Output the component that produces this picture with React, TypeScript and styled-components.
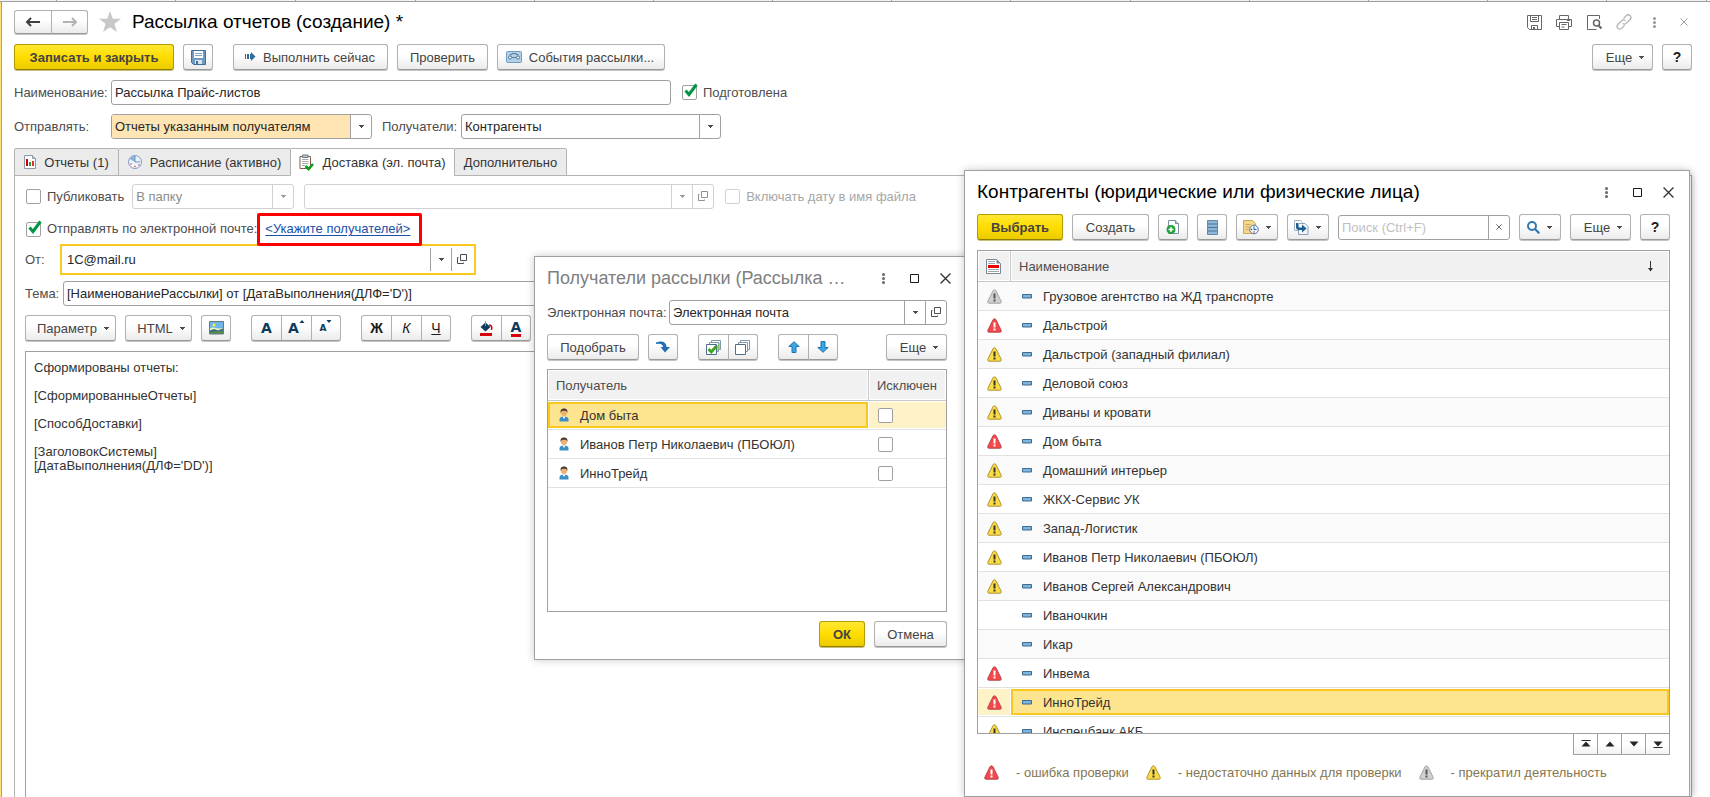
import React from "react";
import styled, { createGlobalStyle, css } from "styled-components";

const c = {
  text: "#333333",
  label: "#4d4d4d",
  line: "#a0a0a0",
  soft: "#d2d2d2",
  accent: "#f9c81e",
  accentFill: "#fde58f",
  accentPale: "#fef2c8",
};

const GlobalStyle = createGlobalStyle`
  *, *::before, *::after { box-sizing: border-box; }
  html, body, #root { height: 100%; }
  body { margin: 0; background: #fff; overflow: hidden; }
  body, button, input, select, textarea {
    font-family: "Liberation Sans", Arial, sans-serif;
    font-size: 13px;
    color: ${c.text};
  }
  svg { display: block; flex: none; }
`;

/* ---------- shell ---------- */

const Shell = styled.div`
  position: relative;
  display: flex;
  flex-direction: column;
  height: 100vh;
  overflow: hidden;
`;

const TabStubs = styled.div`
  display: flex;
  height: 2px;
  flex: none;
  background: #f2f2f2;
  border-bottom: 1px solid ${c.line};
`;

const Stub = styled.span<{ $w: number }>`
  flex: none;
  width: ${(p) => p.$w}px;
  border-right: 1px solid ${c.line};
`;

const Edge = styled.div`
  display: flex;
  flex: 1;
  min-height: 0;
  border-left: 1px solid #ffe27a;
`;

const Main = styled.main`
  display: flex;
  flex-direction: column;
  flex: 1;
  min-width: 0;
  padding: 8px 18px 0 12px;
  border-left: 1px solid ${c.line};
`;

const Bar = styled.div<{ $top?: number; $gap?: number }>`
  display: flex;
  align-items: center;
  flex: none;
  gap: ${(p) => p.$gap ?? 9}px;
  margin-top: ${(p) => p.$top ?? 0}px;
`;

const SystemButtons = styled.div`
  display: flex;
  flex: none;
  margin-right: -7px;
`;

const Spacer = styled.span`
  flex: 1;
`;

const Title = styled.h1<{ $muted?: boolean }>`
  margin: 0;
  font-size: ${(p) => (p.$muted ? 18 : 19)}px;
  line-height: 24px;
  font-weight: 400;
  white-space: nowrap;
  color: ${(p) => (p.$muted ? "#808080" : "#000")};
`;

/* ---------- buttons ---------- */

const Button = styled.button<{ $primary?: boolean; $w?: number }>`
  display: flex;
  align-items: center;
  justify-content: center;
  flex: none;
  height: 26px;
  width: ${(p) => (p.$w ? `${p.$w}px` : "auto")};
  padding: 0;
  white-space: nowrap;
  color: #444;
  border: 1px solid #b0b0b0;
  border-bottom-color: #999;
  border-radius: 3px;
  background: linear-gradient(#fff 40%, #ebebeb);
  box-shadow: 0 1px 0 #c4c4c4;
  ${(p) =>
    p.$primary &&
    css`
      font-weight: 700;
      border-color: #b39b00;
      border-bottom-color: #917e00;
      background: linear-gradient(#ffe833, #ffdd00 50%, #ebcb00);
      box-shadow: 0 1px 0 #c9bd7a;
    `}
`;

const IconText = styled.span`
  display: flex;
  align-items: center;
  gap: 7px;
  margin-right: 2px;
`;

const MenuText = styled.span`
  display: flex;
  align-items: center;
  gap: 6px;
  padding-left: 6px;
  & > svg { margin-top: 2px; }
`;

const MenuIcon = styled.span`
  display: flex;
  align-items: center;
  gap: 6px;
  & > svg:last-child { margin-top: 2px; }
`;

const Group = styled.div<{ $left?: number }>`
  display: flex;
  margin-left: ${(p) => p.$left ?? 0}px;
  & > button + button {
    margin-left: -1px;
    border-top-left-radius: 0;
    border-bottom-left-radius: 0;
  }
  & > button:not(:last-child) {
    border-top-right-radius: 0;
    border-bottom-right-radius: 0;
  }
`;

const NavButton = styled(Button)`
  height: 24px;
`;

const GhostButton = styled.button<{ $w?: number }>`
  display: flex;
  align-items: center;
  justify-content: center;
  flex: none;
  width: ${(p) => p.$w ?? 30}px;
  height: 24px;
  padding: 0;
  border: 0;
  background: none;
`;

const HelpMark = styled.b`
  font-size: 14px;
  color: #1a1a1a;
`;

const Glyph = styled.span<{ $bold?: boolean; $italic?: boolean; $underline?: boolean }>`
  font-size: 14px;
  color: #1a1a1a;
  font-weight: ${(p) => (p.$bold ? 700 : 400)};
  font-style: ${(p) => (p.$italic ? "italic" : "normal")};
  text-decoration: ${(p) => (p.$underline ? "underline" : "none")};
`;

const Letter = styled.b<{ $size?: number; $bar?: boolean }>`
  font-family: "DejaVu Sans", Verdana, sans-serif;
  font-size: ${(p) => p.$size ?? 14}px;
  line-height: 14px;
  color: #0d3b5e;
  border-bottom: ${(p) => (p.$bar ? "3px solid #d8000c" : "0")};
`;

/* ---------- fields ---------- */

const Label = styled.label<{ $w?: number; $left?: number; $off?: boolean }>`
  flex: none;
  width: ${(p) => (p.$w ? `${p.$w}px` : "auto")};
  margin-left: ${(p) => p.$left ?? 0}px;
  line-height: 16px;
  white-space: nowrap;
  color: ${(p) => (p.$off ? "#a6a6a6" : c.label)};
`;

const Field = styled.div<{ $w?: number; $off?: boolean; $fill?: string; $focus?: boolean; $left?: number }>`
  display: flex;
  flex: ${(p) => (p.$w ? "none" : 1)};
  width: ${(p) => (p.$w ? `${p.$w}px` : "auto")};
  min-width: 0;
  height: 25px;
  margin-left: ${(p) => p.$left ?? 0}px;
  border: 1px solid ${(p) => (p.$focus ? "transparent" : p.$off ? c.soft : c.line)};
  border-radius: ${(p) => (p.$focus ? 0 : 3)}px;
  background: #fff;
  outline: ${(p) => (p.$focus ? `2px solid ${c.accent}` : "0")};
  outline-offset: 1px;
  & > input, & > select {
    flex: 1;
    width: 0;
    min-width: 0;
    height: 100%;
    padding: 0 0 0 3px;
    appearance: none;
    border: 0;
    outline: 0;
    border-radius: 2px 0 0 2px;
    background: ${(p) => p.$fill ?? "transparent"};
    color: ${(p) => (p.$off ? "#8c8c8c" : "#262626")};
    opacity: 1;
  }
  & > input::placeholder { color: #bfbfbf; }
`;

const FieldButton = styled.button<{ $off?: boolean; $w?: number }>`
  display: flex;
  align-items: center;
  justify-content: center;
  flex: none;
  width: ${(p) => p.$w ?? 21}px;
  padding: 0;
  border: 0;
  border-left: 1px solid ${(p) => (p.$off ? c.soft : c.line)};
  background: none;
`;

const CheckBox = styled.span<{ $left?: number }>`
  position: relative;
  display: block;
  flex: none;
  width: 15px;
  height: 15px;
  margin-left: ${(p) => p.$left ?? 0}px;
  & > input {
    display: block;
    appearance: none;
    width: 15px;
    height: 15px;
    margin: 0;
    border: 1px solid ${c.line};
    border-radius: 2px;
    background: #fff;
  }
  & > input:disabled { border-color: ${c.soft}; }
  & > svg {
    display: none;
    position: absolute;
    left: 2px;
    top: -2px;
    pointer-events: none;
  }
  & > input:checked + svg { display: block; }
`;

/* ---------- tabs and panel ---------- */

const Tabs = styled.div`
  display: flex;
  flex: none;
  position: relative;
  margin: 9px 0 -1px;
`;

const Tab = styled.button<{ $active?: boolean; $w: number }>`
  display: flex;
  align-items: center;
  justify-content: center;
  gap: 8px;
  width: ${(p) => p.$w}px;
  height: 28px;
  padding: 0;
  margin-right: -1px;
  white-space: nowrap;
  border: 1px solid #b3b3b3;
  border-bottom-color: ${(p) => (p.$active ? "#fff" : "#b3b3b3")};
  border-radius: 2px 2px 0 0;
  background: ${(p) => (p.$active ? "#fff" : "#ebebeb")};
`;

const Panel = styled.section`
  display: flex;
  flex-direction: column;
  flex: 1;
  min-height: 0;
  padding: 8px 10px 0;
  border: 1px solid #b3b3b3;
  border-bottom: 0;
`;

const MarkedLink = styled.span`
  position: relative;
  margin-left: 2px;
  & > a {
    color: #1b4fa8;
    line-height: 16px;
    white-space: nowrap;
    text-underline-offset: 2px;
  }
  &::after {
    content: "";
    position: absolute;
    z-index: 1;
    inset: -8px -12px -9px -8px;
    border: 3px solid #ff0000;
    border-radius: 2px;
    pointer-events: none;
  }
`;

const Editor = styled.textarea`
  flex: 1;
  min-height: 0;
  width: 100%;
  margin: 10px 0 0;
  padding: 9px 8px;
  border: 1px solid ${c.line};
  border-bottom: 0;
  outline: 0;
  resize: none;
  line-height: 14px;
  background: #fff;
`;

/* ---------- floating windows ---------- */

const Window = styled.section`
  position: absolute;
  display: flex;
  flex-direction: column;
  background: #fff;
  border: 1px solid ${c.line};
  box-shadow: 0 0 8px rgba(0, 0, 0, 0.22);
`;

const RecipientsWindow = styled(Window)`
  left: 534px;
  top: 256px;
  width: 440px;
  padding: 9px 26px 12px 12px;
`;

const WindowBehind = styled(Window)`
  left: 980px;
  right: 18px;
  top: 175px;
  bottom: 0;
`;

const PartnersWindow = styled(Window)`
  left: 964px;
  right: 20px;
  top: 170px;
  bottom: 0;
  padding: 9px 19px 0 12px;
`;

const WindowHead = styled.header`
  display: flex;
  align-items: center;
  flex: none;
  height: 24px;
  margin-right: -14px;
`;

const TableBox = styled.div<{ $h?: number; $top?: number }>`
  flex: ${(p) => (p.$h ? "none" : 1)};
  height: ${(p) => (p.$h ? `${p.$h}px` : "auto")};
  min-height: 0;
  margin-top: ${(p) => p.$top ?? 9}px;
  overflow: hidden;
  border: 1px solid ${c.line};
`;

const Table = styled.table`
  width: 100%;
  table-layout: fixed;
  border-collapse: separate;
  border-spacing: 0;
`;

const Th = styled.th<{ $w?: number; $last?: boolean }>`
  width: ${(p) => (p.$w ? `${p.$w}px` : "auto")};
  height: 31px;
  padding: 0 8px;
  text-align: left;
  font-weight: 400;
  color: ${c.label};
  background: #f1f1f1;
  border-bottom: 1px solid #c8c8c8;
  border-right: ${(p) => (p.$last ? "0" : "1px solid #c8c8c8")};
  box-shadow: inset 0 0 0 1px #fff;
`;

const ThInner = styled.div`
  display: flex;
  justify-content: space-between;
  align-items: center;
  padding-right: 7px;
`;

const Tr = styled.tr<{ $alt?: boolean }>`
  background: ${(p) => (p.$alt ? "#fafafa" : "#fff")};
`;

const Td = styled.td<{ $gap?: boolean }>`
  height: 29px;
  padding: 1px ${(p) => (p.$gap ? 1 : 0)}px 1px 0;
  border-bottom: 1px solid #e2e2e2;
`;

const Cell = styled.div<{ $pad: number; $gap?: number; $tone?: "current" | "pale" }>`
  display: flex;
  align-items: center;
  gap: ${(p) => p.$gap ?? 0}px;
  height: 26px;
  padding-left: ${(p) => p.$pad - 2}px;
  white-space: nowrap;
  border: 2px solid
    ${(p) => (p.$tone === "current" ? c.accent : p.$tone === "pale" ? c.accentPale : "transparent")};
  background: ${(p) =>
    p.$tone === "current" ? c.accentFill : p.$tone === "pale" ? c.accentPale : "transparent"};
`;

const Pager = styled.div`
  display: flex;
  justify-content: flex-end;
  flex: none;
  margin-top: -1px;
`;

const PagerButton = styled.button`
  display: flex;
  align-items: center;
  justify-content: center;
  width: 25px;
  height: 22px;
  padding: 0;
  margin-left: -1px;
  border: 1px solid ${c.line};
  background: linear-gradient(#fff 50%, #f2f2f2);
`;

const Legend = styled.footer`
  display: flex;
  align-items: center;
  flex: none;
  height: 41px;
  padding: 0 0 6px 7px;
  color: #857650;
`;

const LegendItem = styled.span`
  display: flex;
  align-items: center;
  gap: 17px;
  margin-right: 17px;
`;

/* ---------- icons ---------- */

const Caret = ({ color = "#4d4d4d" }: { color?: string }) => (
  <svg width="7" height="4" viewBox="0 0 7 4" shapeRendering="crispEdges">
    <path d="M1 0h5v1H5v1H4v1H3V2H2V1H1z" fill={color} />
  </svg>
);

const OpenIcon = ({ color = "#4d4d4d" }: { color?: string }) => (
  <svg width="11" height="11" viewBox="0 0 11 11" fill="none" stroke={color}>
    <path d="M3.500 .5h6v6h-6zM1.500 3.500H.5v6h6v-1" />
  </svg>
);

const Arrow = ({ left, color }: { left?: boolean; color: string }) => (
  <svg width="16" height="10" viewBox="0 0 16 10" fill="none" stroke={color} strokeWidth="2">
    {left ? <path d="M15 5H3M6 1L2 5l4 4" /> : <path d="M1 5h12M10 1l4 4-4 4" />}
  </svg>
);

const Star = () => (
  <svg width="22" height="22" viewBox="0 0 22 22">
    <path d="M11 0l2.800 7.800H22l-6.600 5 2.500 8.200L11 16.200 4.100 21l2.500-8.200L0 7.800h8.200z" fill="#c8c8cb" />
  </svg>
);

const Tick = () => (
  <svg width="14" height="15" viewBox="0 0 14 15">
    <path d="M1.500 7.500l3.500 4L12.500 1.500" fill="none" stroke="#009646" strokeWidth="3" />
  </svg>
);

const Floppy = () => (
  <svg width="15" height="15" viewBox="0 0 15 15">
    <path d="M.5 .5h14v14H2.500l-2-2z" fill="#6f9bc2" stroke="#416f99" />
    <path d="M3 1h9v7H3z" fill="#fff" />
    <path d="M4 3.500h7M4 5.500h7" stroke="#7da5c8" />
    <path d="M4 10h7v4H4z" fill="#d8e4ee" />
    <path d="M5 11h2v3H5z" fill="#416f99" />
  </svg>
);

const RunIcon = () => (
  <svg width="12" height="10" viewBox="0 0 12 10" fill="#2f6d9c">
    <path d="M1 2h1v5H1zM3 2h2v5H3zM6 2h1V0l4.500 4.500L7 9V7H6z" />
  </svg>
);

const TapeIcon = () => (
  <svg width="16" height="12" viewBox="0 0 16 12" fill="none">
    <rect x=".5" y=".5" width="15" height="11" rx="1" fill="#b4d0e6" stroke="#6d9cc4" />
    <path d="M4 4.500V3.500h2v-1h4v1h2v1M5.500 6.500h5" stroke="#5a7f9f" />
    <circle cx="4" cy="6.500" r="1.500" fill="#fff" stroke="#4a7398" />
    <circle cx="12" cy="6.500" r="1.500" fill="#fff" stroke="#4a7398" />
  </svg>
);

const GraySave = () => (
  <svg width="15" height="15" viewBox="0 0 15 15" fill="none" stroke="#666">
    <path d="M.5 .5h14v14h-12l-2-2zM3.500 1v5.500h8V1M5 2.500h5M5 4.500h5M4.500 14v-3.500h6V14M6.500 12v2M7.500 12v2" />
  </svg>
);

const Printer = () => (
  <svg width="16" height="15" viewBox="0 0 16 15" fill="none" stroke="#666">
    <path d="M3.500 4V.5h9V4M3.500 11.500h-3v-7h15v7h-3M3.500 7.500h9v7h-9zM5.500 9.500h5M5.500 12h3M11 5.500h3" />
  </svg>
);

const Preview = () => (
  <svg width="15" height="15" viewBox="0 0 15 15" fill="none" stroke="#666">
    <path d="M12.500 4V.5H.5v14h9" />
    <circle cx="9.500" cy="8" r="3" strokeWidth="1.500" />
    <path d="M11.500 10.500l3 3" strokeWidth="2" />
  </svg>
);

const Chain = () => (
  <svg width="16" height="16" viewBox="0 0 16 16" fill="none" stroke="#b0b0b0" strokeWidth="1.200">
    <path d="M7.500 4.500l2.800-2.800a2.600 2.600 0 0 1 3.800 3.800L10.300 9.300a2.600 2.600 0 0 1-3.700 0M8.500 11.500l-2.800 2.800a2.600 2.600 0 0 1-3.800-3.800L5.700 6.700a2.600 2.600 0 0 1 3.700 0" />
  </svg>
);

const Dots = ({ color = "#666" }: { color?: string }) => (
  <svg width="3" height="11" viewBox="0 0 3 11" fill={color}>
    <circle cx="1.500" cy="1.500" r="1.500" />
    <circle cx="1.500" cy="5.500" r="1.500" />
    <circle cx="1.500" cy="9.500" r="1.500" />
  </svg>
);

const Square = () => (
  <svg width="9" height="9" viewBox="0 0 9 9">
    <path d="M.5 .5h8v8h-8z" fill="none" stroke="#1a1a1a" />
  </svg>
);

const Cross = ({ size = 11, color = "#333" }: { size?: number; color?: string }) => (
  <svg width={size} height={size} viewBox="0 0 10 10">
    <path d="M.5 .5l9 9M9.500 .5l-9 9" stroke={color} strokeWidth="1.200" />
  </svg>
);

const ChartDoc = () => (
  <svg width="12" height="14" viewBox="0 0 12 14">
    <path d="M.5 .5h8l3 3v10H.5z" fill="#fff" stroke="#8b9bab" />
    <path d="M8.500 .5v3h3" fill="#c6d0da" stroke="#8b9bab" />
    <path d="M2 4h2v7H2z" fill="#c00" />
    <path d="M5 7h2v4H5z" fill="#2a9d3c" />
    <path d="M8 6h2v5H8z" fill="#d33" />
  </svg>
);

const Clock = () => (
  <svg width="14" height="14" viewBox="0 0 14 14">
    <circle cx="7" cy="7" r="6.500" fill="#eef4fb" stroke="#7c9fc6" />
    <path d="M7 7V.5A6.500 6.500 0 0 0 1.500 4L7 7z" fill="#8fb4dc" />
    <path d="M7 1v6h5" fill="none" stroke="#6a94c4" />
    <circle cx="11" cy="10" r=".8" fill="#e0402f" />
    <circle cx="7" cy="11.500" r=".8" fill="#e0402f" />
    <circle cx="3" cy="9" r=".8" fill="#e0402f" />
  </svg>
);

const Clipboard = () => (
  <svg width="15" height="17" viewBox="0 0 15 17">
    <path d="M1 2.500h10.500v12H1z" fill="#fff" stroke="#8a5a4a" />
    <path d="M3.500 1h5.500v2.500H3.500z" fill="#b9c4cc" stroke="#6e7b85" />
    <path d="M3 5.500h6.500M3 7.500h6.500M3 9.500h6.500M3 11.500h3" stroke="#a4adb5" />
    <path d="M6.500 12l3 3 4.500-5" fill="none" stroke="#0c9c1c" strokeWidth="2.600" />
  </svg>
);

const Picture = () => (
  <svg width="15" height="14" viewBox="0 0 15 14">
    <path d="M.5 .5h14v12.500H.5z" fill="#6fb6e8" stroke="#6a7680" />
    <path d="M1 7c4-2 8 2 13 0v2.500H1z" fill="#e9f3c0" />
    <path d="M1 9.500l4-1.500 4 1.500 5-2v5H1z" fill="#35688a" />
    <path d="M1 11l13-1v2.500H1z" fill="#5d8e3c" />
    <circle cx="5" cy="4" r="1.500" fill="#fff04a" />
  </svg>
);

const SizeMark = ({ up }: { up?: boolean }) => (
  <svg width="6" height="16" viewBox="0 0 6 16" fill="#0d3b5e">
    {up ? <path d="M3 0l2.500 3h-5z" /> : <path d="M3 3L.5 0h5z" />}
  </svg>
);

const Bucket = () => (
  <svg width="13" height="15" viewBox="0 0 13 15">
    <path d="M5.500 1.500L10.500 6 5.500 10.500.5 6z" fill="#0d3b5e" />
    <path d="M5.500 0v5" stroke="#7e9ab0" />
    <path d="M9 4c3 0 3 2 2.500 5" fill="none" stroke="#d8000c" strokeWidth="1.500" />
    <path d="M0 12h12v3H0z" fill="#d8000c" />
  </svg>
);

const Swoop = () => (
  <svg width="14" height="12" viewBox="0 0 14 12">
    <path d="M0 1.500C5-.8 10.500.5 10.500 6H14l-5 5.500L4.500 6h2.600C7 3.500 4.500 2 0 3z" fill="#1f6fb2" />
  </svg>
);

const Stack = ({ checked }: { checked?: boolean }) => (
  <svg width="16" height="15" viewBox="0 0 16 15">
    <g fill="#fff" stroke="#7f98ac">
      <path d="M5.500 .5h9v9h-9z" />
      <path d="M3.500 2.500h9v9h-9z" />
      <path d="M.5 4.500h10v10H.5z" stroke="#4f6f8a" />
    </g>
    {checked && (
      <>
        <path d="M11 6l3-4v7l-3 3z" fill="#8cc25f" opacity=".7" />
        <path d="M2.500 9l2.800 3 5.200-6" fill="none" stroke="#3aa41c" strokeWidth="2.800" />
      </>
    )}
  </svg>
);

const Block = ({ down }: { down?: boolean }) => (
  <svg width="12" height="12" viewBox="0 0 12 12">
    <path
      d={down ? "M6 11.300L.8 6.500H4V.5h4v6h3.200z" : "M6 .7l5.200 4.800H8v6H4v-6H.8z"}
      fill="#3ba5e6"
      stroke="#1f75ad"
    />
  </svg>
);

const Person = () => (
  <svg width="14" height="14" viewBox="0 0 14 14">
    <path d="M2.500 13.500v-2c0-2 1.500-3 4.500-3s4.500 1 4.500 3v2z" fill="#3a8fc7" />
    <path d="M5.500 8.500L7 11l1.500-2.500z" fill="#fff" />
    <circle cx="7" cy="5" r="3" fill="#efb070" />
    <path d="M3.700 5C3 1.500 5 .5 7 .5s4 1 3.300 4.500C9.500 3 9 2.800 7 2.800S4.500 3 3.700 5z" fill="#45352a" />
  </svg>
);

const NewDoc = () => (
  <svg width="14" height="16" viewBox="0 0 14 16">
    <path d="M2.500 1.500h7l3 3v10h-10z" fill="#fff" stroke="#7790a5" />
    <path d="M9.500 1.500v3h3" fill="#c9d6e1" stroke="#7790a5" />
    <circle cx="5" cy="10.500" r="4.500" fill="#22a03a" />
    <path d="M5 8v5M2.500 10.500h5" stroke="#fff" strokeWidth="1.400" />
  </svg>
);

const ListIcon = () => (
  <svg width="11" height="15" viewBox="0 0 11 15">
    <path d="M.5 .5h10v14H.5z" fill="#8fb6d8" stroke="#6288aa" />
    <path d="M1 4h9M1 7.500h9M1 11h9" stroke="#49749c" />
  </svg>
);

const ScheduleDoc = () => (
  <svg width="16" height="16" viewBox="0 0 16 16">
    <path d="M.5 1.500h9l3 3v10H.5z" fill="#f6d88c" stroke="#c9a85c" />
    <path d="M2.500 5.500h5M2.500 8h4M2.500 10.500h3" stroke="#c9a85c" />
    <circle cx="11" cy="10.500" r="4.300" fill="#eef4fb" stroke="#55789f" />
    <path d="M11 7.500v3h2.500" fill="none" stroke="#1f5fa8" />
    <circle cx="8.500" cy="10.500" r=".8" fill="#d22" />
    <circle cx="11" cy="13" r=".8" fill="#d22" />
  </svg>
);

const CopyDocs = () => (
  <svg width="15" height="15" viewBox="0 0 15 15">
    <path d="M.5 .5h6l2 2v8h-8z" fill="#fff" stroke="#9fb0c0" />
    <path d="M4.500 3.500h6.500l3 3v8H4.500z" fill="#f1f5f9" stroke="#8aa0b4" />
    <path d="M2 3h2v3c0 1 .5 1.500 1.500 1.500H8V4.500l4.500 4-4.500 4V10H5C3 10 2 9 2 7z" fill="#1d5e92" />
  </svg>
);

const Lens = () => (
  <svg width="13" height="13" viewBox="0 0 13 13" fill="none" stroke="#2f78b0">
    <circle cx="5" cy="5" r="4" strokeWidth="2" />
    <path d="M8 8l4.300 4.300" strokeWidth="2.200" />
  </svg>
);

const HeaderDoc = () => (
  <svg width="15" height="15" viewBox="0 0 15 15">
    <path d="M.5 .5h10l4 4v10H.5z" fill="#fff" stroke="#7a8894" />
    <path d="M10.500 .5v4h4z" fill="#7a8894" />
    <path d="M2 2.500h7M2 4.500h7M2 10.500h11M2 12.500h11" stroke="#9aa6b0" />
    <path d="M2 6h11v3H2z" fill="#f00000" />
  </svg>
);

const Dash = () => (
  <svg width="10" height="5" viewBox="0 0 10 5">
    <path d="M.5 .5h9v3.500h-9z" fill="#7fb4dc" stroke="#3d6a90" />
  </svg>
);

const SortArrow = () => (
  <svg width="7" height="11" viewBox="0 0 7 11">
    <path d="M3.500 0v9" stroke="#333" />
    <path d="M1 7h5l-2.500 3.500z" fill="#333" />
  </svg>
);

type Level = "gray" | "red" | "yellow";
const levels: Record<Level, [string, string, string]> = {
  gray: ["#d0d0d0", "#a3a3a3", "#555"],
  red: ["#f4484b", "#b8474a", "#fff"],
  yellow: ["#fbdc45", "#ab9233", "#333"],
};

const Warn = ({ level }: { level: Level }) => {
  const [fill, stroke, mark] = levels[level];
  return (
    <svg width="15" height="15" viewBox="0 0 15 15">
      <path
        d="M7.500 .8c.7 0 1.200.4 1.600 1.200l5 10.200c.5 1.100 0 2-1.100 2H2c-1.100 0-1.600-.9-1.100-2L5.900 2C6.300 1.200 6.800.8 7.500.8z"
        fill={fill}
        stroke={stroke}
      />
      <path d="M6.500 4.500h2v5h-2zM6.500 10.500h2v2h-2z" fill={mark} />
    </svg>
  );
};

const PagerIcon = ({ up, edge }: { up?: boolean; edge?: boolean }) => (
  <svg width="10" height="8" viewBox="0 0 10 8" fill="#262626">
    <path d={up ? "M5 1.500L9.500 6.500h-9z" : "M5 6.500L.5 1.500h9z"} />
    {edge && <path d={up ? "M.5 0h9v1h-9z" : "M.5 7h9v1h-9z"} />}
  </svg>
);

/* ---------- data ---------- */

const recipients = ["Дом быта", "Иванов Петр Николаевич (ПБОЮЛ)", "ИнноТрейд"];

const partners: [string, Level | null][] = [
  ["Грузовое агентство на ЖД транспорте", "gray"],
  ["Дальстрой", "red"],
  ["Дальстрой (западный филиал)", "yellow"],
  ["Деловой союз", "yellow"],
  ["Диваны и кровати", "yellow"],
  ["Дом быта", "red"],
  ["Домашний интерьер", "yellow"],
  ["ЖКХ-Сервис УК", "yellow"],
  ["Запад-Логистик", "yellow"],
  ["Иванов Петр Николаевич (ПБОЮЛ)", "yellow"],
  ["Иванов Сергей Александрович", "yellow"],
  ["Иваночкин", null],
  ["Икар", null],
  ["Инвема", "red"],
  ["ИнноТрейд", "red"],
  ["Инспецбанк АКБ", "yellow"],
];

const letterBody = `Сформированы отчеты:

[СформированныеОтчеты]

[СпособДоставки]

[ЗаголовокСистемы]
[ДатаВыполнения(ДЛФ='DD')]`;

const stubs = [57, 119, 120, 120, 119, 119, 119, 119, 119, 120, 119, 119, 119, 100, 92].flatMap((w, i) =>
  i === 12 ? [w, 119] : [w]
);

/* ---------- composed parts ---------- */

const Check = ({
  id,
  on,
  off,
  label,
  left,
}: {
  id: string;
  on?: boolean;
  off?: boolean;
  label?: string;
  left?: number;
}) => (
  <CheckBox $left={left}>
    <input id={id} type="checkbox" defaultChecked={on} disabled={off} aria-label={label} />
    <Tick />
  </CheckBox>
);

const Combo = ({
  id,
  value,
  w,
  off,
  fill,
  focus,
  open,
  left,
}: {
  id: string;
  value: string;
  w?: number;
  off?: boolean;
  fill?: string;
  focus?: boolean;
  open?: boolean;
  left?: number;
}) => (
  <Field $w={w} $off={off} $fill={fill} $focus={focus} $left={left}>
    <select id={id} disabled={off} aria-label={off ? "Способ публикации" : undefined}>
      <option>{value}</option>
    </select>
    <FieldButton $off={off} disabled={off} aria-label="Выбрать из списка">
      <Caret color={off ? "#a0a0a0" : undefined} />
    </FieldButton>
    {open && (
      <FieldButton aria-label="Открыть">
        <OpenIcon />
      </FieldButton>
    )}
  </Field>
);

const MoreButton = () => (
  <Button $w={61}>
    <MenuText>
      Еще <Caret />
    </MenuText>
  </Button>
);

const WindowControls = () => (
  <>
    <GhostButton $w={31} aria-label="Меню">
      <Dots />
    </GhostButton>
    <GhostButton $w={31} aria-label="Развернуть">
      <Square />
    </GhostButton>
    <GhostButton $w={31} aria-label="Закрыть">
      <Cross />
    </GhostButton>
  </>
);

const Recipients = () => (
  <RecipientsWindow aria-label="Получатели рассылки">
    <WindowHead>
      <Title as="h2" $muted>
        Получатели рассылки (Рассылка …
      </Title>
      <Spacer />
      <WindowControls />
    </WindowHead>
    <Bar $top={10} $gap={0}>
      <Label htmlFor="mail-kind" $w={122}>
        Электронная почта:
      </Label>
      <Combo id="mail-kind" value="Электронная почта" open />
    </Bar>
    <Bar $top={9}>
      <Button $w={92}>Подобрать</Button>
      <Button $w={30} aria-label="Заполнить">
        <Swoop />
      </Button>
      <Group $left={11}>
        <Button $w={31} aria-label="Отметить все">
          <Stack checked />
        </Button>
        <Button $w={30} aria-label="Снять отметки">
          <Stack />
        </Button>
      </Group>
      <Group $left={11}>
        <Button $w={31} aria-label="Вверх">
          <Block />
        </Button>
        <Button $w={30} aria-label="Вниз">
          <Block down />
        </Button>
      </Group>
      <Spacer />
      <MoreButton />
    </Bar>
    <TableBox $h={243}>
      <Table>
        <thead>
          <tr>
            <Th>Получатель</Th>
            <Th $w={77} $last>
              Исключен
            </Th>
          </tr>
        </thead>
        <tbody>
          {recipients.map((name, i) => (
            <Tr key={name}>
              <Td $gap>
                <Cell $pad={9} $gap={9} $tone={i === 0 ? "current" : undefined}>
                  <Person />
                  {name}
                </Cell>
              </Td>
              <Td>
                <Cell $pad={9} $tone={i === 0 ? "pale" : undefined}>
                  <Check id={`excluded-${i}`} label={`Исключен: ${name}`} />
                </Cell>
              </Td>
            </Tr>
          ))}
        </tbody>
      </Table>
    </TableBox>
    <Bar $top={9}>
      <Spacer />
      <Button $primary $w={46}>
        ОК
      </Button>
      <Button $w={73}>Отмена</Button>
    </Bar>
  </RecipientsWindow>
);

const Partners = () => (
  <PartnersWindow aria-label="Контрагенты">
    <WindowHead>
      <Title as="h2">Контрагенты (юридические или физические лица)</Title>
      <Spacer />
      <WindowControls />
    </WindowHead>
    <Bar $top={10}>
      <Button $primary $w={86}>
        Выбрать
      </Button>
      <Button $w={77}>Создать</Button>
      <Button $w={30} aria-label="Добавить">
        <NewDoc />
      </Button>
      <Button $w={30} aria-label="Список">
        <ListIcon />
      </Button>
      <Button $w={42} aria-label="Расписание">
        <MenuIcon>
          <ScheduleDoc />
          <Caret />
        </MenuIcon>
      </Button>
      <Button $w={42} aria-label="Создать на основании">
        <MenuIcon>
          <CopyDocs />
          <Caret />
        </MenuIcon>
      </Button>
      <Field>
        <input type="text" placeholder="Поиск (Ctrl+F)" aria-label="Поиск" />
        <FieldButton aria-label="Очистить">
          <Cross size={6} />
        </FieldButton>
      </Field>
      <Button $w={42} aria-label="Найти">
        <MenuIcon>
          <Lens />
          <Caret />
        </MenuIcon>
      </Button>
      <MoreButton />
      <Button $w={30}>
        <HelpMark>?</HelpMark>
      </Button>
    </Bar>
    <TableBox $top={10}>
      <Table>
        <thead>
          <tr>
            <Th $w={33} aria-label="Состояние">
              <HeaderDoc />
            </Th>
            <Th $last>
              <ThInner>
                Наименование
                <SortArrow />
              </ThInner>
            </Th>
          </tr>
        </thead>
        <tbody>
          {partners.map(([name, level], i) => (
            <Tr key={name} $alt={i % 2 === 0 && i !== 14}>
              <Td $gap>
                <Cell $pad={9} $tone={i === 14 ? "pale" : undefined}>
                  {level && <Warn level={level} />}
                </Cell>
              </Td>
              <Td>
                <Cell $pad={11} $gap={11} $tone={i === 14 ? "current" : undefined}>
                  <Dash />
                  {name}
                </Cell>
              </Td>
            </Tr>
          ))}
        </tbody>
      </Table>
    </TableBox>
    <Pager>
      <PagerButton aria-label="В начало">
        <PagerIcon up edge />
      </PagerButton>
      <PagerButton aria-label="Выше">
        <PagerIcon up />
      </PagerButton>
      <PagerButton aria-label="Ниже">
        <PagerIcon />
      </PagerButton>
      <PagerButton aria-label="В конец">
        <PagerIcon edge />
      </PagerButton>
    </Pager>
    <Legend>
      <LegendItem>
        <Warn level="red" />- ошибка проверки
      </LegendItem>
      <LegendItem>
        <Warn level="yellow" />- недостаточно данных для проверки
      </LegendItem>
      <LegendItem>
        <Warn level="gray" />- прекратил деятельность
      </LegendItem>
    </Legend>
  </PartnersWindow>
);

export default function App() {
  return (
    <Shell>
      <GlobalStyle />
      <TabStubs>
        {stubs.map((w, i) => (
          <Stub key={i} $w={w} />
        ))}
      </TabStubs>
      <Edge>
        <Main>
          <Bar $gap={11}>
            <Group>
              <NavButton $w={38} aria-label="Назад">
                <Arrow left color="#404040" />
              </NavButton>
              <NavButton $w={37} aria-label="Вперед">
                <Arrow color="#b3b3b3" />
              </NavButton>
            </Group>
            <Star />
            <Title>Рассылка отчетов (создание) *</Title>
            <Spacer />
            <SystemButtons>
              <GhostButton aria-label="Сохранить">
                <GraySave />
              </GhostButton>
              <GhostButton aria-label="Печать">
                <Printer />
              </GhostButton>
              <GhostButton aria-label="Просмотр">
                <Preview />
              </GhostButton>
              <GhostButton aria-label="Ссылка">
                <Chain />
              </GhostButton>
              <GhostButton aria-label="Меню">
                <Dots color="#999" />
              </GhostButton>
              <GhostButton aria-label="Закрыть">
                <Cross size={8} color="#999" />
              </GhostButton>
            </SystemButtons>
          </Bar>

          <Bar $top={10}>
            <Button $primary $w={160}>
              Записать и закрыть
            </Button>
            <Button $w={30} aria-label="Записать">
              <Floppy />
            </Button>
            <Group $left={11}>
              <Button $w={155}>
                <IconText>
                  <RunIcon />
                  Выполнить сейчас
                </IconText>
              </Button>
            </Group>
            <Button $w={91}>Проверить</Button>
            <Button $w={168}>
              <IconText>
                <TapeIcon />
                События рассылки...
              </IconText>
            </Button>
            <Spacer />
            <MoreButton />
            <Button $w={30}>
              <HelpMark>?</HelpMark>
            </Button>
          </Bar>

          <Bar $top={10} $gap={0}>
            <Label htmlFor="name" $w={97}>
              Наименование:
            </Label>
            <Field $w={560}>
              <input id="name" type="text" defaultValue="Рассылка Прайс-листов" />
            </Field>
            <Check id="ready" on left={11} />
            <Label htmlFor="ready" $left={6}>
              Подготовлена
            </Label>
          </Bar>

          <Bar $top={9} $gap={0}>
            <Label htmlFor="mode" $w={97}>
              Отправлять:
            </Label>
            <Combo id="mode" value="Отчеты указанным получателям" w={261} fill="#ffe5b3" />
            <Label htmlFor="target" $w={79} $left={10}>
              Получатели:
            </Label>
            <Combo id="target" value="Контрагенты" w={260} />
          </Bar>

          <Tabs role="tablist">
            <Tab role="tab" $w={105}>
              <ChartDoc />
              Отчеты (1)
            </Tab>
            <Tab role="tab" $w={173}>
              <Clock />
              Расписание (активно)
            </Tab>
            <Tab role="tab" $w={165} $active aria-selected>
              <Clipboard />
              Доставка (эл. почта)
            </Tab>
            <Tab role="tab" $w={113}>
              Дополнительно
            </Tab>
          </Tabs>

          <Panel>
            <Bar $gap={6}>
              <Check id="publish" left={1} />
              <Label htmlFor="publish">Публиковать</Label>
              <Combo id="publish-to" value="В папку" w={162} left={2} off />
              <Field $w={410} $left={4} $off>
                <input type="text" disabled aria-label="Папка" />
                <FieldButton $off disabled aria-label="Выбрать из списка">
                  <Caret color="#a0a0a0" />
                </FieldButton>
                <FieldButton $off disabled aria-label="Открыть">
                  <OpenIcon color="#909090" />
                </FieldButton>
              </Field>
              <Check id="with-date" off left={5} />
              <Label htmlFor="with-date" $off>
                Включать дату в имя файла
              </Label>
            </Bar>
            <Bar $top={12} $gap={6}>
              <Check id="by-mail" on left={1} />
              <Label htmlFor="by-mail">Отправлять по электронной почте:</Label>
              <MarkedLink>
                <a href="#recipients">&lt;Укажите получателей&gt;</a>
              </MarkedLink>
            </Bar>
            <Bar $top={10} $gap={0}>
              <Label htmlFor="from" $w={38}>
                От:
              </Label>
              <Combo id="from" value="1C@mail.ru" w={410} focus open />
            </Bar>
            <Bar $top={9} $gap={0}>
              <Label htmlFor="subject" $w={38}>
                Тема:
              </Label>
              <Field>
                <input
                  id="subject"
                  type="text"
                  defaultValue="[НаименованиеРассылки] от [ДатаВыполнения(ДЛФ='D')]"
                />
              </Field>
            </Bar>
            <Bar $top={9}>
              <Button $w={91}>
                <MenuText>
                  Параметр <Caret />
                </MenuText>
              </Button>
              <Button $w={67}>
                <MenuText>
                  HTML <Caret />
                </MenuText>
              </Button>
              <Button $w={30} aria-label="Картинка">
                <Picture />
              </Button>
              <Group $left={11}>
                <Button $w={31} aria-label="Шрифт">
                  <Letter>A</Letter>
                </Button>
                <Button $w={31} aria-label="Крупнее">
                  <Letter>A</Letter>
                  <SizeMark up />
                </Button>
                <Button $w={30} aria-label="Мельче">
                  <Letter $size={9}>A</Letter>
                  <SizeMark />
                </Button>
              </Group>
              <Group $left={11}>
                <Button $w={31}>
                  <Glyph $bold>Ж</Glyph>
                </Button>
                <Button $w={31}>
                  <Glyph $italic>К</Glyph>
                </Button>
                <Button $w={30}>
                  <Glyph $underline>Ч</Glyph>
                </Button>
              </Group>
              <Group $left={11}>
                <Button $w={31} aria-label="Цвет фона">
                  <Bucket />
                </Button>
                <Button $w={30} aria-label="Цвет текста">
                  <Letter $bar>A</Letter>
                </Button>
              </Group>
            </Bar>
            <Editor defaultValue={letterBody} aria-label="Текст письма" spellCheck={false} />
          </Panel>
        </Main>
      </Edge>
      <Recipients />
      <WindowBehind as="div" />
      <Partners />
    </Shell>
  );
}
